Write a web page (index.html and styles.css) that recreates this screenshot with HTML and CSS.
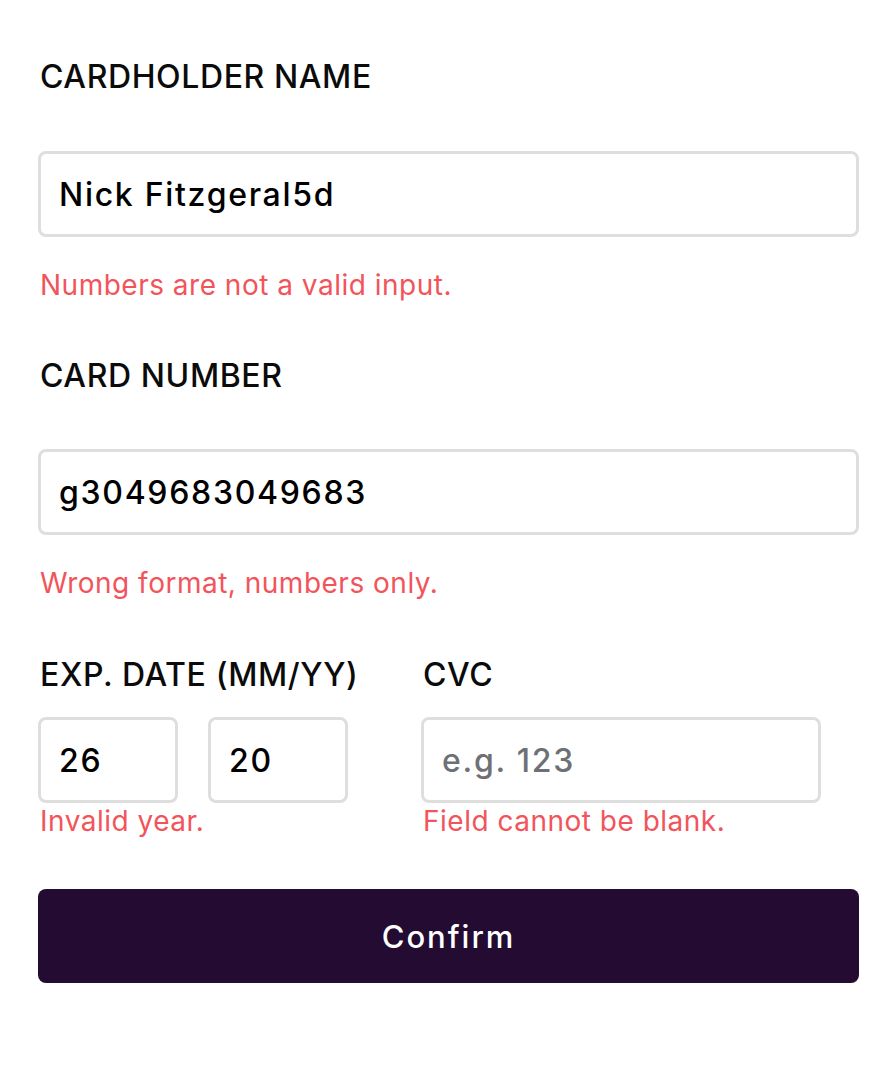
FILE: index.html
```html
<!DOCTYPE html>
<html lang="en">
<head>
<meta charset="utf-8">
<title>Card form</title>
<link rel="stylesheet" href="styles.css">
</head>
<body>
<form class="card-form">
  <div class="field">
    <label class="label" for="name">CARDHOLDER NAME</label>
    <input class="input" id="name" type="text" value="Nick Fitzgeral5d">
    <p class="error">Numbers are not a valid input.</p>
  </div>
  <div class="field">
    <label class="label label-next" for="number">CARD NUMBER</label>
    <input class="input" id="number" type="text" value="g3049683049683">
    <p class="error">Wrong format, numbers only.</p>
  </div>
  <div class="row">
    <div class="group">
      <label class="label label-next" for="mm">EXP. DATE (MM/YY)</label>
      <div class="exp-inputs">
        <input class="input input-small" id="mm" type="text" value="26">
        <input class="input input-small" id="yy" type="text" value="20">
      </div>
      <p class="error error-tight">Invalid year.</p>
    </div>
    <div class="group">
      <label class="label label-next" for="cvc">CVC</label>
      <input class="input input-cvc" id="cvc" type="text" placeholder="e.g. 123">
      <p class="error error-tight">Field cannot be blank.</p>
    </div>
  </div>
  <button class="confirm" type="button">Confirm</button>
</form>
</body>
</html>
```
FILE: styles.css
```css
* { box-sizing: border-box; }
html, body { margin: 0; padding: 0; background: #ffffff; }
body {
  font-family: Inter, "Noto Sans", sans-serif;
  color: #000000;
}
.card-form {
  display: flex;
  flex-direction: column;
  width: 821px;
  margin-left: 38px;
  padding-top: 57px;
}
.field { display: flex; flex-direction: column; }
.label {
  display: block;
  font-size: 32px;
  line-height: 40px;
  font-weight: 500;
  letter-spacing: 0.6px;
  color: #0b0b0b;
  margin: 0 0 0 2px;
}
.label-next { margin-top: 53px; }
.input {
  display: block;
  width: 100%;
  height: 86px;
  margin-top: 54px;
  border: 3px solid #dedede;
  border-radius: 8px;
  padding: 0 18px;
  font-family: inherit;
  font-size: 32px;
  font-weight: 500;
  letter-spacing: 1.7px;
  color: #000000;
  background: #ffffff;
  outline: none;
}
.field .label-next + .input { margin-top: 53px; }
.input::placeholder { color: #6e7075; opacity: 1; }
.error {
  margin: 30px 0 0 2px;
  font-size: 28px;
  line-height: 36px;
  letter-spacing: 0.5px;
  color: #f2545b;
}
.error-tight { margin-top: 0; }
.row {
  display: grid;
  grid-template-columns: 353px 400px;
  column-gap: 30px;
}
.group { display: flex; flex-direction: column; }
.group .label-next { margin-top: 54px; }
.exp-inputs {
  display: flex;
  gap: 30px;
  margin-top: 22px;
}
.exp-inputs .input { margin-top: 0; }
.input-small { width: 140px; }
.input-cvc { margin-top: 22px; width: 400px; }
.confirm {
  margin-top: 50px;
  height: 94px;
  width: 100%;
  border: none;
  border-radius: 8px;
  background: #230b31;
  color: #ffffff;
  font-family: inherit;
  font-size: 31px;
  font-weight: 500;
  letter-spacing: 2px;
}
```
